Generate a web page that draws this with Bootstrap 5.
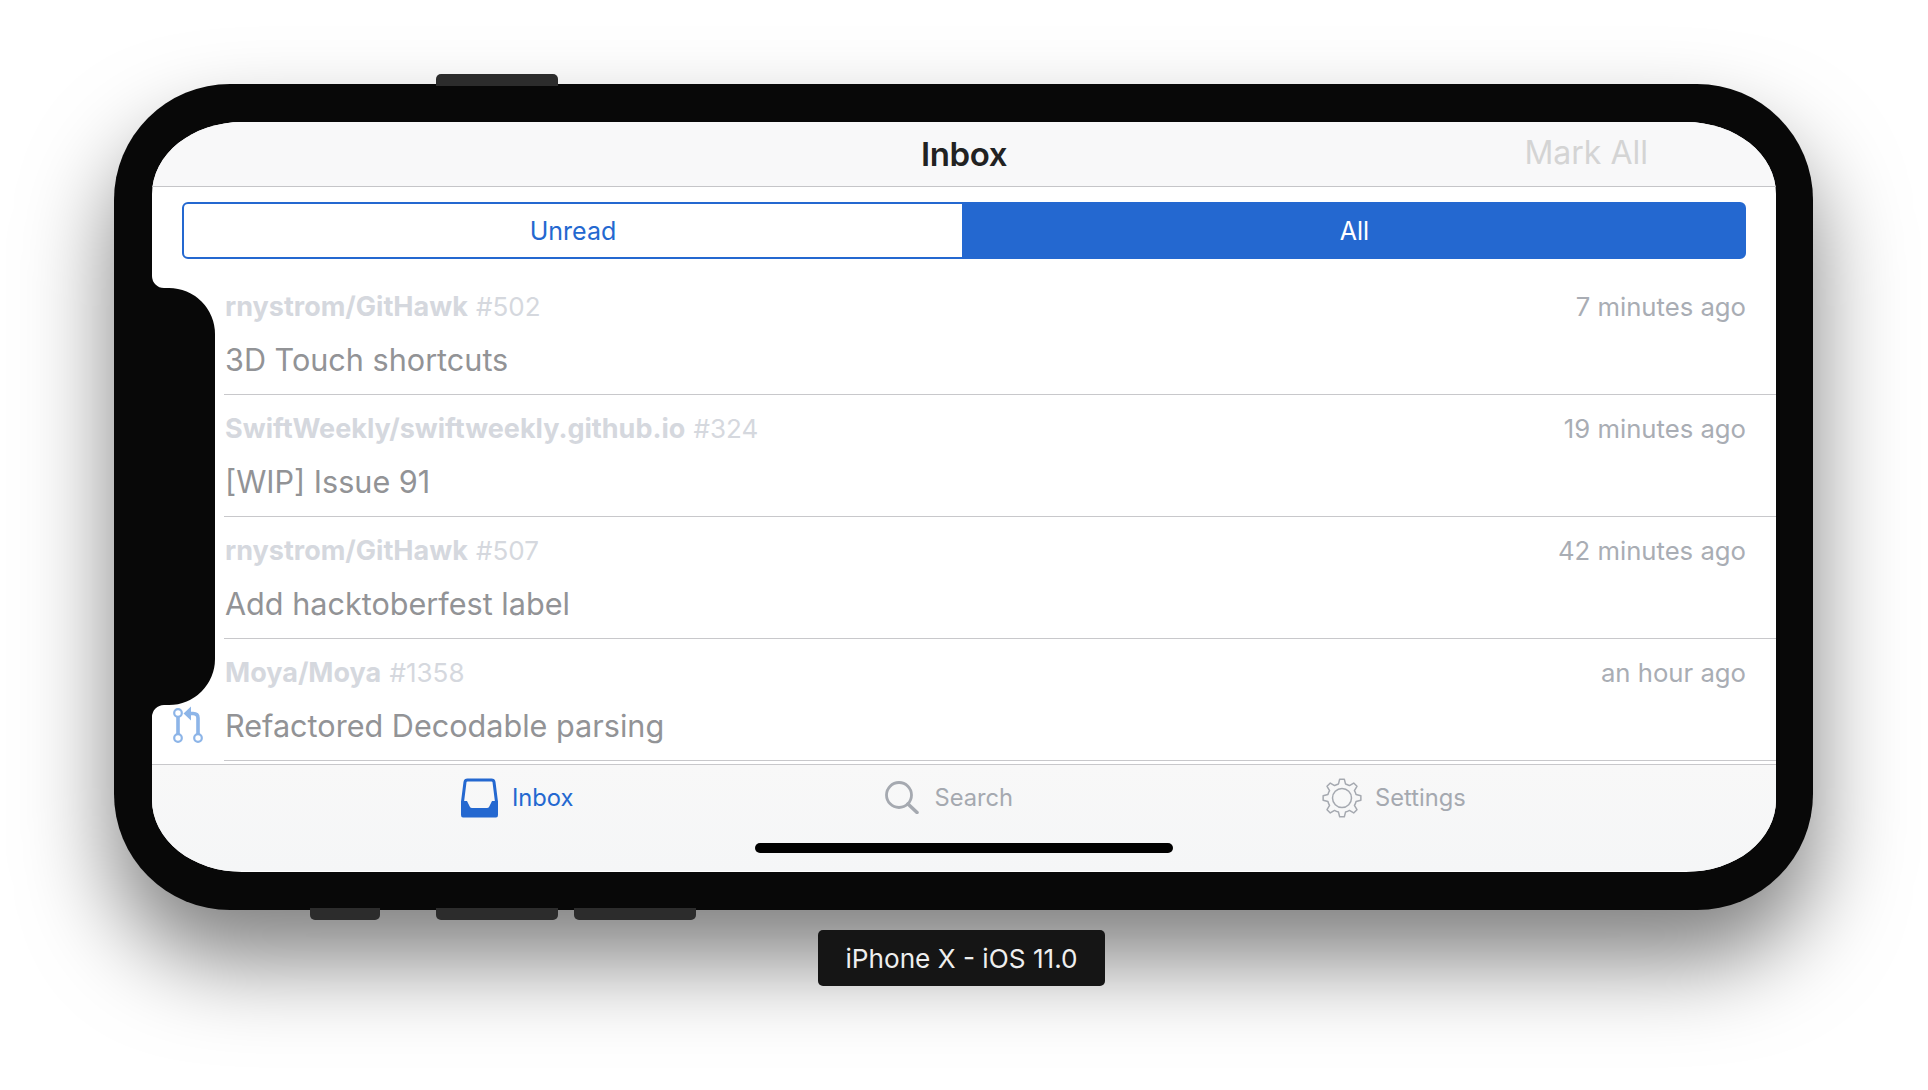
<!DOCTYPE html>
<html lang="en">
<head>
    <meta charset="UTF-8" />
    <meta name="viewport" content="width=device-width, initial-scale=1.0"/>
    <link href="https://cdn.jsdelivr.net/npm/bootstrap@5.3.0/dist/css/bootstrap.min.css" rel="stylesheet"/>
    <title>GitHawk Inbox</title>
    <style>
        body { background: #fff; font-family: "Inter", "Liberation Sans", sans-serif; overflow: hidden; }
        .stage { width: 1928px; height: 1090px; padding-top: 84px; }
        .phone { position: relative; width: 1699px; height: 826px; margin-left: 114px; padding: 38px 37px 38px 38px; background: #080808; border-radius: 116px; box-shadow: 0 50px 90px rgba(0,0,0,.5); }
        .side-btn { position: absolute; height: 12px; background: #2c2c2c; }
        .side-top { top: -10px; left: 322px; width: 122px; border-radius: 5px 5px 0 0; }
        .side-bot { bottom: -10px; border-radius: 0 0 5px 5px; }
        .side-a { left: 196px; width: 70px; }
        .side-b { left: 322px; width: 122px; }
        .side-c { left: 460px; width: 122px; }
        .screen { position: relative; height: 750px; background: #fff; border-radius: 90px / 72px; overflow: hidden; }
        .notch { position: absolute; left: 0; top: 154px; z-index: 2; }
        .top-bar { height: 65px; background: #f8f8f9; border-bottom: 1px solid #c5c5c8; padding-right: 128px; }
        .top-title { font-size: 33px; font-weight: 600; color: #222; letter-spacing: -.4px; padding-top: 2px; }
        .mark-all { font-size: 32px; color: #d4d4d4; line-height: 1; margin-top: -2px; }
        .segs { margin: 15px 30px 14px; height: 57px; }
        .segs .btn { flex: 1 1 0; font-size: 25px; line-height: 1; padding-top: 8px; border: 2px solid #2468d0; color: #2468d0; background: #fff; }
        .segs .btn:first-child { flex: 0 0 782px; }
        .segs .btn.active { background: #2468d0; color: #fff; border-color: #2468d0; }
        .note-row { height: 122px; }
        .gutter { width: 72px; flex: none; padding: 67px 0 0 21px; }
        .note-body { flex: 1 1 auto; border-bottom: 1px solid #c8c8cb; padding: 17px 30px 0 1px; }
        .note-head { height: 34px; font-size: 25.700px; line-height: 33px; color: #a9adb4; }
        .repo { font-size: 27px; font-weight: 700; color: #d5d8de; }
        .num { font-size: 26px; margin-left: 1px; color: #d5d8de; }
        .note-title { margin-top: 16px; font-size: 30.600px; line-height: 40px; color: #929396; }
        .tab-bar { margin-top: 3px; height: 107px; background: linear-gradient(#f8f8f8, #f5f6f7); border-top: 1px solid #c8c8cb; }
        .tabs { height: 66px; padding-left: 308px; gap: 312px; }
        .tab-item { font-size: 23.700px; color: #a5a9b0; gap: 13px; }
        .tab-item.on { color: #2468d0; }
        .tab-search { gap: 15px; margin-right: -3px; }
        .home-bar { width: 418px; height: 10px; margin: 12px auto 0; background: #000; border-radius: 5px; }
        .device-label { width: 287px; height: 56px; margin: 20px 0 0 818px; padding-top: 2px; background: #151515; color: #eee; font-size: 26.200px; border-radius: 5px; position: relative; }
    </style>
</head>
<body>
    <div class="stage">
        <div class="phone">
            <div class="side-btn side-top"></div>
            <div class="side-btn side-bot side-a"></div>
            <div class="side-btn side-bot side-b"></div>
            <div class="side-btn side-bot side-c"></div>

            <div class="screen d-flex flex-column">
                <!-- sensor housing, landscape -->
                <svg class="notch" width="63" height="441" viewBox="0 0 63 441">
                    <path d="M0 0A12 12 0 0 0 12 12H17A46 46 0 0 1 63 58V383A46 46 0 0 1 17 429H12A12 12 0 0 0 0 441Z" fill="#080808"/>
                </svg>

                <div class="top-bar d-flex align-items-center position-relative">
                    <div class="top-title position-absolute start-50 translate-middle-x">Inbox</div>
                    <div class="mark-all ms-auto">Mark All</div>
                </div>

                <div class="btn-group segs" role="group">
                    <button type="button" class="btn">Unread</button>
                    <button type="button" class="btn active">All</button>
                </div>

                <div class="list-group list-group-flush">
                    <div class="note-row d-flex">
                        <div class="gutter"></div>
                        <div class="note-body">
                            <div class="note-head d-flex justify-content-between"><span><span class="repo">rnystrom/GitHawk</span> <span class="num">#502</span></span><span>7 minutes ago</span></div>
                            <div class="note-title">3D Touch shortcuts</div>
                        </div>
                    </div>
                    <div class="note-row d-flex">
                        <div class="gutter"></div>
                        <div class="note-body">
                            <div class="note-head d-flex justify-content-between"><span><span class="repo">SwiftWeekly/swiftweekly.github.io</span> <span class="num">#324</span></span><span>19 minutes ago</span></div>
                            <div class="note-title">[WIP] Issue 91</div>
                        </div>
                    </div>
                    <div class="note-row d-flex">
                        <div class="gutter"></div>
                        <div class="note-body">
                            <div class="note-head d-flex justify-content-between"><span><span class="repo">rnystrom/GitHawk</span> <span class="num">#507</span></span><span>42 minutes ago</span></div>
                            <div class="note-title">Add hacktoberfest label</div>
                        </div>
                    </div>
                    <div class="note-row d-flex">
                        <div class="gutter">
                            <svg class="d-block" width="30" height="38" viewBox="0 0 30 38" fill="none" stroke="#8db5e8" stroke-width="3.600">
                                <circle cx="5" cy="7" r="3.800" stroke-width="2.200"/>
                                <circle cx="5" cy="32" r="3.800" stroke-width="2.200"/>
                                <circle cx="25" cy="32" r="3.800" stroke-width="2.200"/>
                                <path d="M5 11V28M25 28V12Q25 7.500 20 7.500H15"/>
                                <path d="M10.500 7.500L18 .5V14.500Z" fill="#8db5e8" stroke="none"/>
                            </svg>
                        </div>
                        <div class="note-body">
                            <div class="note-head d-flex justify-content-between"><span><span class="repo">Moya/Moya</span> <span class="num">#1358</span></span><span>an hour ago</span></div>
                            <div class="note-title">Refactored Decodable parsing</div>
                        </div>
                    </div>
                </div>

                <div class="tab-bar">
                    <div class="tabs d-flex align-items-center">
                        <div class="tab-item on d-flex align-items-center">
                            <svg width="39" height="40" viewBox="0 0 39 40">
                                <path d="M2.500 24L5 4Q5.400 2 7.500 2H31.500Q33.600 2 34 4L36.500 24" fill="none" stroke="#2468d0" stroke-width="3"/>
                                <path d="M1 23H7L10 29Q10.500 30 12 30H27Q28.500 30 29 29L32 23H38V37Q38 39.500 36 39.500H3Q1 39.500 1 37Z" fill="#2468d0"/>
                            </svg>
                            <span>Inbox</span>
                        </div>
                        <div class="tab-item tab-search d-flex align-items-center">
                            <svg width="34" height="33" viewBox="0 0 34 33" fill="none" stroke="#a5a9b0">
                                <circle cx="14" cy="14" r="12.500" stroke-width="2.800"/>
                                <path d="M23 23L32 31.500" stroke-width="3.500" stroke-linecap="round"/>
                            </svg>
                            <span>Search</span>
                        </div>
                        <div class="tab-item d-flex align-items-center">
                            <svg width="40" height="40" viewBox="-20 -20 40 40" fill="none" stroke="#a5a9b0" stroke-width="1.500">
                                <path id="gearPath" stroke-linejoin="round"/>
                                <circle r="9.500"/>
                            </svg>
                            <span>Settings</span>
                        </div>
                    </div>
                    <div class="home-bar"></div>
                </div>
            </div>
        </div>
        <div class="device-label d-flex align-items-center justify-content-center">iPhone X - iOS 11.0</div>
    </div>

    <script src="https://cdn.jsdelivr.net/npm/bootstrap@5.3.0/dist/js/bootstrap.bundle.min.js"></script>
    <script>
        // gear outline for the settings tab, 8 teeth
        const pt = (deg, r) => {
            const a = deg * Math.PI / 180;
            return (r * Math.sin(a)).toFixed(2) + ' ' + (-r * Math.cos(a)).toFixed(2);
        };
        let d = '';
        for (let i = 0; i < 8; i++) {
            const c = i * 45;
            d += (i ? 'A14.5 14.5 0 0 1 ' : 'M') + pt(c - 14, 14.5) + 'L' + pt(c - 7, 19) + 'L' + pt(c + 7, 19) + 'L' + pt(c + 14, 14.5);
        }
        d += 'A14.5 14.5 0 0 1 ' + pt(-14, 14.5) + 'Z';
        document.getElementById('gearPath').setAttribute('d', d);
    </script>
</body>
</html>
